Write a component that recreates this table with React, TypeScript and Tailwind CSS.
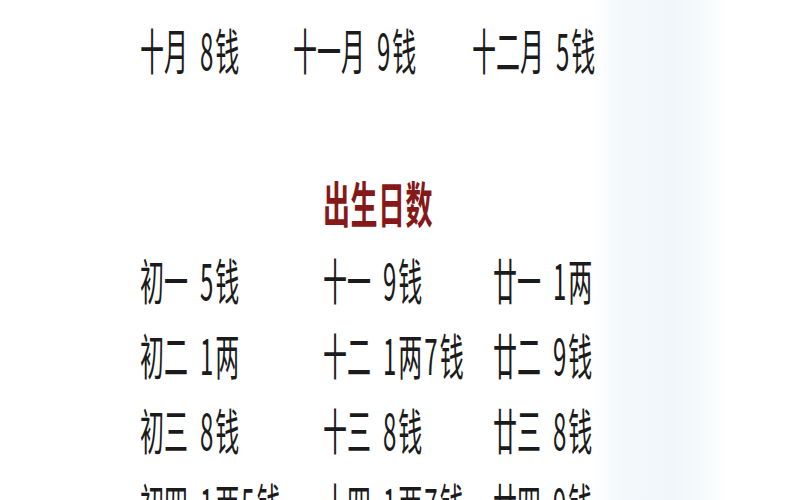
const font = "font-['Noto_Sans_CJK_SC','Noto_Sans',sans-serif]";

type Cell = { name: string; weight: string };

const monthRows: Cell[][] = [
  [
    { name: "七月", weight: "9钱" },
    { name: "八月", weight: "1两5钱" },
    { name: "九月", weight: "1两8钱" },
  ],
  [
    { name: "十月", weight: "8钱" },
    { name: "十一月", weight: "9钱" },
    { name: "十二月", weight: "5钱" },
  ],
];

const dayRows: Cell[][] = [
  [
    { name: "初一", weight: "5钱" },
    { name: "十一", weight: "9钱" },
    { name: "廿一", weight: "1两" },
  ],
  [
    { name: "初二", weight: "1两" },
    { name: "十二", weight: "1两7钱" },
    { name: "廿二", weight: "9钱" },
  ],
  [
    { name: "初三", weight: "8钱" },
    { name: "十三", weight: "8钱" },
    { name: "廿三", weight: "8钱" },
  ],
  [
    { name: "初四", weight: "1两5钱" },
    { name: "十四", weight: "1两7钱" },
    { name: "廿四", weight: "9钱" },
  ],
];

function Entry({ cell, className }: { cell: Cell; className: string }) {
  return (
    <div className={`${className} flex items-center gap-[12px] text-[24px] leading-none text-[#1b1b1b]`}>
      <span className="inline-block scale-y-[2.05]">{cell.name}</span>
      <span className="inline-block scale-y-[2.05] tracking-[2px]">{cell.weight}</span>
    </div>
  );
}

export default function App() {
  return (
    <div
      className={`${font} relative h-[500px] w-[800px] overflow-hidden bg-[linear-gradient(to_right,#ffffff_0%,#ffffff_74%,#f3f8fb_78%,#f1f6fa_84%,#f6fafc_88%,#ffffff_91%)]`}
    >
      <div className="-mt-[64px] pl-[140px]">
        {monthRows.map((row, i) => (
          <div key={i} className="flex h-[75px] items-center">
            <Entry cell={row[0]} className="w-[153px]" />
            <Entry cell={row[1]} className="w-[179px]" />
            <Entry cell={row[2]} className="" />
          </div>
        ))}

        <div className="mt-[76px] flex h-[80px] items-center pl-[183px]">
          <h2 className="inline-block scale-y-[1.8] text-[27px] font-bold leading-none tracking-[0.5px] text-[#861818]">
            出生日数
          </h2>
        </div>

        {dayRows.map((row, i) => (
          <div key={i} className="flex h-[75px] items-center">
            <Entry cell={row[0]} className="w-[183px]" />
            <Entry cell={row[1]} className="w-[170px]" />
            <Entry cell={row[2]} className="" />
          </div>
        ))}
      </div>
    </div>
  );
}
